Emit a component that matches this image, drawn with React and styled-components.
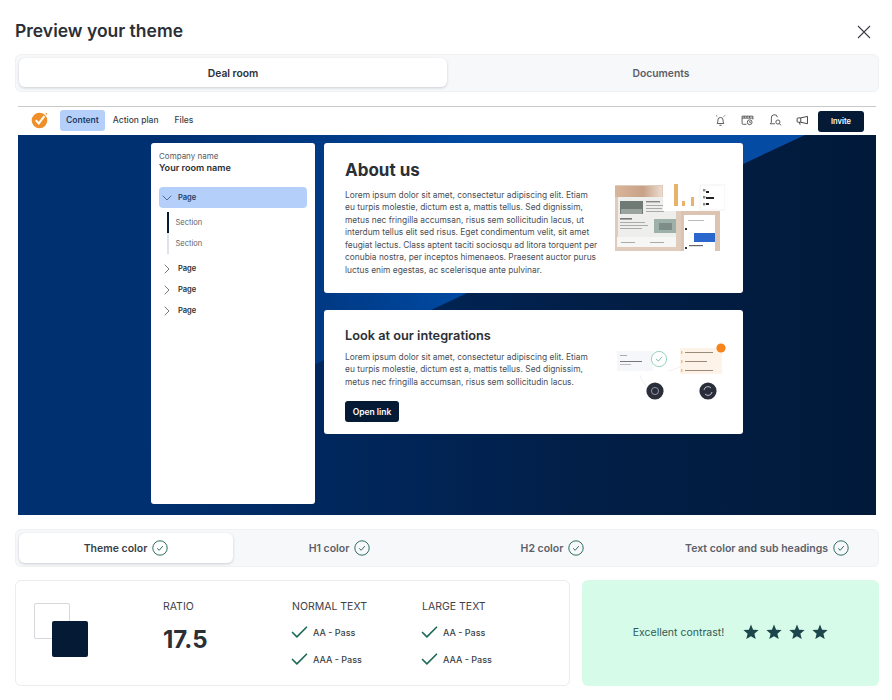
import React from "react";
import styled, { createGlobalStyle } from "styled-components";
import { Check, ChevronDown, ChevronRight } from "lucide-react";

const lorem =
  "Lorem ipsum dolor sit amet, consectetur adipiscing elit. Etiam eu turpis molestie, dictum est a, mattis tellus. Sed dignissim, metus nec fringilla accumsan, risus sem sollicitudin lacus, ut interdum tellus elit sed risus. Eget condimentum velit, sit amet feugiat lectus. Class aptent taciti sociosqu ad litora torquent per conubia nostra, per inceptos himenaeos. Praesent auctor purus luctus enim egestas, ac scelerisque ante pulvinar.";
const loremShort =
  "Lorem ipsum dolor sit amet, consectetur adipiscing elit. Etiam eu turpis molestie, dictum est a, mattis tellus. Sed dignissim, metus nec fringilla accumsan, risus sem sollicitudin lacus.";

const CircleCheck = () => (
  <svg width="16" height="16" viewBox="0 0 16 16" fill="none" stroke="#2f6f5e" strokeWidth="1">
    <circle cx="8" cy="8" r="7.2" />
    <path d="M5.2 8.4l2 1.9 3.6-4.2" />
  </svg>
);

const CloseIcon = () => (
  <svg width="14" height="14" viewBox="0 0 14 14" fill="none" stroke="#3a3f47" strokeWidth="1.1">
    <path d="M1 1l12 12M13 1L1 13" />
  </svg>
);

const LogoIcon = () => (
  <svg width="18" height="18" viewBox="0 0 18 18">
    <circle cx="8.5" cy="9.5" r="7.8" fill="#ef8f2a" />
    <path d="M4.8 9.2l3 3.2 5.6-7.2" fill="none" stroke="#fff" strokeWidth="2" />
    <circle cx="15.4" cy="2.8" r="1" fill="#f3b26a" />
  </svg>
);

const BellIcon = () => (
  <svg width="13" height="13" viewBox="0 0 12 12" fill="none" stroke="#444" strokeWidth="0.8">
    <path d="M3 8.8c.6-1 .6-2 .6-3.2a2.4 2.4 0 0 1 4.8 0c0 1.2 0 2.2.6 3.2zM5 10.4h2M2 1.4l1 1M10 1.4l-1 1" />
  </svg>
);

const CalendarIcon = () => (
  <svg width="13" height="13" viewBox="0 0 12 12" fill="none" stroke="#444" strokeWidth="0.8">
    <path d="M5 9.5H2.2A1 1 0 0 1 1 8.5V2h10v3M1 3.8h10M3 2v1.8M5.5 2v1.8M8 2v1.8" />
    <circle cx="8" cy="7.6" r="2.2" />
    <path d="M8 6.6v1.1h1" />
  </svg>
);

const ChatSearchIcon = () => (
  <svg width="13" height="13" viewBox="0 0 12 12" fill="none" stroke="#444" strokeWidth="0.8">
    <path d="M5.4 9H1.2l1-1.4V4a2.8 2.8 0 0 1 5.6-1" />
    <circle cx="8.2" cy="7.4" r="1.9" />
    <path d="M9.6 8.8L11 10.4" />
  </svg>
);

const MegaphoneIcon = () => (
  <svg width="13" height="13" viewBox="0 0 12 12" fill="none" stroke="#444" strokeWidth="0.9">
    <path d="M10.6 2.2v6.8L4.4 7.6H2a1 1 0 0 1-1-1V4.6a1 1 0 0 1 1-1h2.4zM4.4 3.6v4M3.2 7.6l.6 2.4" />
  </svg>
);

const StarIcon = () => (
  <svg width="16" height="16" viewBox="0 0 16 16" fill="#1d464c">
    <path d="M8 .6l2.1 5.1 5.5.4-4.2 3.6 1.3 5.4L8 12.2l-4.7 2.9 1.3-5.4L.4 6.1l5.5-.4z" />
  </svg>
);

const AboutPicture = () => (
  <svg width="112" height="70" viewBox="0 0 112 70">
    <defs>
      <filter id="soft1"><feGaussianBlur stdDeviation="0.5" /></filter>
      <linearGradient id="band" x1="0" x2="1">
        <stop offset="0" stopColor="#d9b59a" />
        <stop offset="0.6" stopColor="#c8a288" />
        <stop offset="1" stopColor="#ecdccf" />
      </linearGradient>
    </defs>
    <g filter="url(#soft1)">
      <rect x="2" y="2" width="66" height="66" fill="#e0ccbd" />
      <rect x="2" y="3" width="47" height="11" fill="url(#band)" />
      <rect x="5" y="14" width="58" height="46" fill="#eeeeec" />
      <rect x="7" y="18" width="23" height="13" fill="#6f7a74" />
      <rect x="8" y="26" width="21" height="5" fill="#9aa39d" />
      <rect x="33" y="18" width="14" height="1.4" fill="#888" />
      <rect x="33" y="22" width="18" height="1" fill="#aaa" />
      <rect x="33" y="25" width="16" height="1" fill="#aaa" />
      <rect x="33" y="28" width="18" height="1" fill="#aaa" />
      <rect x="7" y="35" width="12" height="1.6" fill="#777" />
      <rect x="7" y="39" width="25" height="1" fill="#aaa" />
      <rect x="7" y="42" width="28" height="1" fill="#aaa" />
      <rect x="7" y="45" width="22" height="1" fill="#aaa" />
      <rect x="41" y="36" width="22" height="14" fill="#9db0a9" />
      <rect x="46" y="40" width="13" height="7" fill="#7e8d88" />
      <rect x="4" y="54" width="59" height="10" fill="#f6f6f5" />
      <rect x="8" y="59" width="14" height="1" fill="#aaa" />
      <rect x="37" y="59" width="14" height="1" fill="#aaa" />
      <rect x="50" y="2" width="36" height="26" fill="#fff" />
      <rect x="61" y="1" width="4" height="22" fill="#e7b36c" />
      <rect x="69" y="18" width="3" height="5" fill="#e7b36c" />
      <rect x="78" y="14" width="3" height="9" fill="#e7b36c" />
      <rect x="87" y="2" width="25" height="25" fill="#fff" stroke="#e8e8e8" strokeWidth="0.6" />
      <rect x="90" y="6" width="2.4" height="2.4" fill="#8a8a8a" />
      <rect x="93" y="8" width="3" height="2" fill="#222" />
      <rect x="90" y="13" width="2.4" height="2.4" fill="#8a8a8a" />
      <rect x="93" y="14" width="8" height="2" fill="#222" />
      <rect x="90" y="20" width="2.4" height="2.4" fill="#8a8a8a" />
      <rect x="93" y="20" width="3" height="2" fill="#222" />
      <rect x="68" y="28" width="39" height="40" fill="#dcc3b2" />
      <rect x="71" y="32" width="31" height="36" fill="#fff" />
      <rect x="75" y="37" width="16" height="1" fill="#bbb" />
      <rect x="72" y="45" width="2" height="2" fill="#333" />
      <rect x="81" y="50" width="21" height="9" fill="#2c66cc" />
      <rect x="72" y="64" width="2" height="2" fill="#333" />
      <rect x="76" y="62" width="14" height="1.2" fill="#666" />
    </g>
  </svg>
);

const IntegrationsPicture = () => (
  <PictureSvg width="112" height="68" viewBox="0 0 112 68">
    <defs>
      <filter id="soft2"><feGaussianBlur stdDeviation="0.4" /></filter>
    </defs>
    <g filter="url(#soft2)">
      <path d="M24 32c2 8 8 14 16 18M52 28c6-1 12-4 18-8" fill="none" stroke="#eeeeee" strokeWidth="0.8" />
      <rect x="1" y="8" width="36" height="20" fill="#f5f7fa" />
      <rect x="4" y="12" width="7" height="1" fill="#aaa" />
      <rect x="4" y="18" width="22" height="1" fill="#777" />
      <rect x="4" y="21" width="11" height="1" fill="#bbb" />
      <circle cx="43" cy="16" r="7.6" fill="#fff" stroke="#7fc7b0" strokeWidth="0.8" />
      <path d="M40 16l2.4 2.2 3.6-4.4" fill="none" stroke="#5fae95" strokeWidth="0.8" />
      <rect x="64" y="5" width="42" height="26" fill="#fdf3e8" />
      <rect x="69" y="9" width="28" height="1" fill="#9a8a7a" />
      <rect x="69" y="18" width="22" height="1" fill="#9a8a7a" />
      <rect x="69" y="27" width="28" height="1" fill="#9a8a7a" />
      <rect x="65" y="8" width="1.4" height="3" fill="#eec36f" />
      <rect x="65" y="17" width="1.4" height="3" fill="#eec36f" />
      <rect x="65" y="26" width="1.4" height="3" fill="#eec36f" />
      <circle cx="105" cy="5" r="4.6" fill="#f5841f" />
      <circle cx="39" cy="48" r="8.6" fill="#2b2f3a" />
      <circle cx="39" cy="48" r="3.6" fill="none" stroke="#aab" strokeWidth="0.8" />
      <circle cx="92" cy="48" r="8.6" fill="#2b2f3a" />
      <path d="M88 47a4 4 0 0 1 7-2M96 49a4 4 0 0 1-7 2" fill="none" stroke="#dde" strokeWidth="0.8" />
    </g>
  </PictureSvg>
);

const Tab = ({ active, children }) => <TabItem $active={active}>{children}</TabItem>;

const CheckTab = ({ active, children }) => (
  <ColorTab $active={active}>
    {children}
    <CircleCheck />
  </ColorTab>
);

const PassRow = ({ children }) => (
  <Pass>
    <Check size={21} strokeWidth={1.9} color="#1f6a58" />
    {children}
  </Pass>
);

const TextColumn = ({ title }) => (
  <Column>
    <Label>{title}</Label>
    <PassRow>AA - Pass</PassRow>
    <PassRow>AAA - Pass</PassRow>
  </Column>
);

const NavPage = ({ children }) => (
  <PageRow>
    <ChevronRight size={16} strokeWidth={1} color="#333" />
    {children}
  </PageRow>
);

const App = () => {
  return (
    <Page>
      <GlobalStyle />
      <Header>
        <Title>Preview your theme</Title>
        <CloseIcon />
      </Header>

      <Tabs>
        <Tab active>Deal room</Tab>
        <Tab>Documents</Tab>
      </Tabs>

      <Preview>
        <Nav>
          <NavLeft>
            <LogoIcon />
            <NavLinks>
              <NavLink $active>Content</NavLink>
              <NavLink>Action plan</NavLink>
              <NavLink>Files</NavLink>
            </NavLinks>
          </NavLeft>
          <NavRight>
            <NavIcons>
              <BellIcon />
              <CalendarIcon />
              <ChatSearchIcon />
              <MegaphoneIcon />
            </NavIcons>
            <Invite>Invite</Invite>
          </NavRight>
        </Nav>
        <Room>
          <RoomInner>
            <Sidebar>
              <Company>Company name</Company>
              <RoomName>Your room name</RoomName>
              <OpenPage>
                <ChevronDown size={16} strokeWidth={1} color="#1d3a66" />
                Page
              </OpenPage>
              <Sections>
                <Section $current>Section</Section>
                <Section>Section</Section>
              </Sections>
              <NavPage>Page</NavPage>
              <NavPage>Page</NavPage>
              <NavPage>Page</NavPage>
            </Sidebar>
            <Cards>
              <AboutCard>
                <CardText>
                  <H1>About us</H1>
                  <Body>{lorem}</Body>
                </CardText>
                <AboutPicture />
              </AboutCard>
              <LookCard>
                <LookText>
                  <H2>Look at our integrations</H2>
                  <Body>{loremShort}</Body>
                  <OpenLink>Open link</OpenLink>
                </LookText>
                <IntegrationsPicture />
              </LookCard>
            </Cards>
          </RoomInner>
        </Room>
      </Preview>

      <ColorTabs>
        <CheckTab active>Theme color</CheckTab>
        <CheckTab>H1 color</CheckTab>
        <CheckTab>H2 color</CheckTab>
        <CheckTab>Text color and sub headings</CheckTab>
      </ColorTabs>

      <Results>
        <ScoreCard>
          <Swatches>
            <LightSwatch />
            <DarkSwatch />
          </Swatches>
          <RatioColumn>
            <Label>RATIO</Label>
            <Ratio>17.5</Ratio>
          </RatioColumn>
          <TextColumn title="NORMAL TEXT" />
          <TextColumn title="LARGE TEXT" />
        </ScoreCard>
        <Verdict>
          Excellent contrast!
          <Stars>
            <StarIcon />
            <StarIcon />
            <StarIcon />
            <StarIcon />
          </Stars>
        </Verdict>
      </Results>
    </Page>
  );
};

export default App;

const GlobalStyle = createGlobalStyle`
  html, body {
    margin: 0;
    background: #fff;
  }
  body {
    font-family: Inter, "Liberation Sans", sans-serif;
    color: #2b2f36;
  }
`;

const Page = styled.div`
  width: 892px;
  height: 700px;
  box-sizing: border-box;
  padding: 0 13px 0 15px;
  overflow: hidden;
`;
const Header = styled.div`
  height: 54px;
  display: flex;
  align-items: center;
  justify-content: space-between;
  padding: 9px 8px 0 0;
  box-sizing: border-box;
`;
const Title = styled.h1`
  margin: 0 0 3px;
  font-size: 17.5px;
  font-weight: 600;
  color: #2b2f36;
`;
const Tabs = styled.div`
  height: 38px;
  box-sizing: border-box;
  display: grid;
  grid-template-columns: 428px 1fr;
  padding: 3px 3px 4px;
  background: #f7f8fa;
  border: 1px solid #f0f1f3;
  border-radius: 6px;
`;
const TabItem = styled.div`
  display: flex;
  align-items: center;
  justify-content: center;
  font-size: 10.3px;
  font-weight: 600;
  border-radius: 6px;
  color: ${(p) => (p.$active ? "#2b2f36" : "#5b6069")};
  background: ${(p) => (p.$active ? "#fff" : "transparent")};
  box-shadow: ${(p) => (p.$active ? "0 1px 3px rgba(30, 40, 60, 0.2)" : "none")};
`;
const Preview = styled.div`
  margin: 14px 3px 0 3px;
  height: 408px;
  display: flex;
  flex-direction: column;
  border-top: 1px solid #c9c9c9;
`;
const Nav = styled.div`
  height: 28px;
  flex-shrink: 0;
  display: flex;
  align-items: center;
  justify-content: space-between;
  padding: 0 12px 0 13px;
  background: #fff;
`;
const NavLeft = styled.div`
  display: flex;
  align-items: center;
  gap: 11px;
  padding-bottom: 2px;
`;
const NavLinks = styled.div`
  display: flex;
  align-items: center;
  gap: 2px;
`;
const NavLink = styled.div`
  height: 21px;
  display: flex;
  align-items: center;
  padding: 0 6px;
  margin-right: ${(p) => (p.$active ? "0" : "2px")};
  font-size: 8.5px;
  font-weight: ${(p) => (p.$active ? 600 : 500)};
  color: ${(p) => (p.$active ? "#1d3a66" : "#3a3f47")};
  background: ${(p) => (p.$active ? "#b4d0fa" : "transparent")};
  border-radius: 3px;
`;
const NavRight = styled.div`
  display: flex;
  align-items: center;
  gap: 9px;
`;
const NavIcons = styled.div`
  display: flex;
  align-items: center;
  gap: 14.5px;
  margin-bottom: 2px;
`;
const Invite = styled.div`
  width: 46px;
  height: 21px;
  display: flex;
  align-items: center;
  justify-content: center;
  font-size: 7.5px;
  font-weight: 600;
  color: #fff;
  background: #051a35;
  border-radius: 3px;
`;
const Room = styled.div`
  flex: 1;
  display: grid;
  background: linear-gradient(90deg, #003070 0%, #003070 15%, #00275c 38%, #021f48 65%, #011a3a 100%);

  &::before {
    content: "";
    grid-area: 1 / 1;
    clip-path: polygon(0 0, 787px 0, 0 368px);
    background: linear-gradient(90deg, #003070 0%, #003070 15%, #003a85 36%, #004aa2 52%, #074ca5 100%);
  }
`;
const RoomInner = styled.div`
  grid-area: 1 / 1;
  position: relative;
  display: flex;
  align-items: flex-start;
  gap: 9px;
  padding: 8px 0 0 133px;
`;
const Sidebar = styled.div`
  width: 164px;
  height: 361px;
  box-sizing: border-box;
  padding: 8px 8px;
  background: #fff;
  border-radius: 3px;
`;
const Company = styled.div`
  font-size: 8px;
  line-height: 10px;
  color: #555a62;
`;
const RoomName = styled.div`
  margin-top: 1px;
  font-size: 9.1px;
  line-height: 12px;
  font-weight: 600;
  color: #2b2f36;
`;
const OpenPage = styled.div`
  margin-top: 13px;
  height: 21px;
  display: flex;
  align-items: center;
  gap: 3px;
  font-size: 7.5px;
  font-weight: 600;
  color: #1d3a66;
  background: #b4d0fa;
  border-radius: 4px;
`;
const Sections = styled.div`
  margin: 4px 0 4px 8px;
`;
const Section = styled.div`
  height: 21px;
  display: flex;
  align-items: center;
  padding-left: 6.5px;
  font-size: 7.5px;
  color: #5b6069;
  border-left: 2px solid ${(p) => (p.$current ? "#051a35" : "#dfe2e8")};
`;
const PageRow = styled.div`
  height: 21px;
  display: flex;
  align-items: center;
  gap: 3px;
  font-size: 7.5px;
  font-weight: 600;
  color: #2b2f36;
`;
const Cards = styled.div`
  width: 419px;
  display: flex;
  flex-direction: column;
  gap: 17px;
`;
const Card = styled.div`
  box-sizing: border-box;
  display: flex;
  align-items: center;
  justify-content: space-between;
  background: #fff;
  border-radius: 3px;
`;
const AboutCard = styled(Card)`
  height: 150px;
  padding: 0 18px 0 21px;
`;
const LookCard = styled(Card)`
  height: 124px;
  padding: 0 15px 0 21px;
`;
const CardText = styled.div`
  width: 254px;
`;
const LookText = styled(CardText)`
  padding-top: 6px;
`;
const PictureSvg = styled.svg`
  margin-top: 10px;
`;
const H1 = styled.h2`
  margin: 0 0 9px;
  font-size: 17px;
  line-height: 20px;
  font-weight: 700;
  color: #2b2f36;
`;
const H2 = styled.h3`
  margin: 0 0 7px;
  font-size: 12.75px;
  line-height: 16px;
  font-weight: 600;
  color: #2b2f36;
`;
const Body = styled.p`
  margin: 0;
  font-size: 8.4px;
  line-height: 12.5px;
  color: #4a4f57;
`;
const OpenLink = styled.div`
  margin-top: 13px;
  width: 54px;
  height: 21px;
  display: flex;
  align-items: center;
  justify-content: center;
  font-size: 8.5px;
  font-weight: 600;
  color: #fff;
  background: #051a35;
  border-radius: 3px;
`;
const ColorTabs = styled.div`
  margin-top: 14px;
  height: 38px;
  box-sizing: border-box;
  display: grid;
  grid-template-columns: 214px 213px 213px 1fr;
  padding: 3px;
  background: #f7f8fa;
  border: 1px solid #f0f1f3;
  border-radius: 6px;
`;
const ColorTab = styled.div`
  display: flex;
  align-items: center;
  justify-content: center;
  gap: 5px;
  font-size: 10.5px;
  font-weight: 600;
  color: ${(p) => (p.$active ? "#3a3f47" : "#5b6069")};
  background: ${(p) => (p.$active ? "#fff" : "transparent")};
  border-radius: 6px;
  box-shadow: ${(p) => (p.$active ? "0 1px 3px rgba(30, 40, 60, 0.2)" : "none")};
`;
const Results = styled.div`
  margin-top: 13px;
  display: grid;
  grid-template-columns: 555px 297px;
  gap: 12px;
  height: 106px;
`;
const ScoreCard = styled.div`
  box-sizing: border-box;
  display: flex;
  padding: 0 0 0 18px;
  background: #fff;
  border: 1px solid #ececee;
  border-radius: 6px;
`;
const Swatches = styled.div`
  position: relative;
  width: 129px;
  margin-top: 22px;
`;
const LightSwatch = styled.div`
  width: 36px;
  height: 36px;
  box-sizing: border-box;
  background: #fff;
  border: 1px solid #d5d7db;
  border-radius: 2px;
`;
const DarkSwatch = styled.div`
  position: absolute;
  left: 18px;
  top: 18px;
  width: 36px;
  height: 36px;
  background: #051a35;
  border-radius: 2px;
`;
const RatioColumn = styled.div`
  width: 129px;
  padding-top: 19px;
`;
const Label = styled.div`
  font-size: 10.5px;
  line-height: 13px;
  font-weight: 400;
  color: #3d4148;
`;
const Ratio = styled.div`
  margin-top: 12px;
  font-size: 24px;
  line-height: 30px;
  font-weight: 700;
  color: #2b2f36;
`;
const Column = styled.div`
  width: 130px;
  padding-top: 19px;
`;
const Pass = styled.div`
  height: 27px;
  display: flex;
  align-items: center;
  gap: 3px;
  font-size: 9px;
  font-weight: 500;
  color: #3a3f47;

  svg {
    margin-left: -3px;
  }

  ${Label} + & {
    margin-top: 6px;
  }
`;
const Verdict = styled.div`
  display: flex;
  align-items: center;
  justify-content: center;
  gap: 19px;
  padding-bottom: 2px;
  font-size: 10.5px;
  color: #2f5a57;
  background: #d6fbe8;
  border-radius: 6px;
`;
const Stars = styled.div`
  display: flex;
  gap: 7px;
`;
